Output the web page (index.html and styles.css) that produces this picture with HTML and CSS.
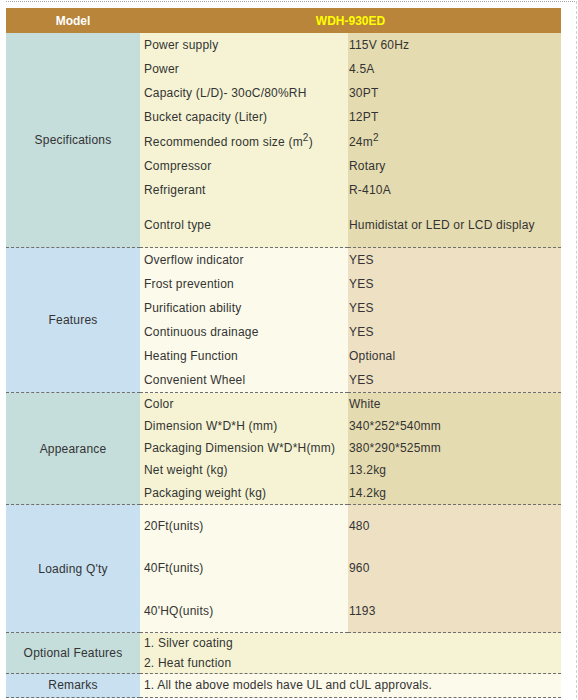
FILE: index.html
```html
<!DOCTYPE html>
<html lang="en">
<head>
    <meta charset="UTF-8">
    <meta name="viewport" content="width=device-width, initial-scale=1.0">
    <title>WDH-930ED Specifications</title>
    <link rel="stylesheet" href="styles.css">
</head>
<body>
    <div class="page">
        <table class="spec">
            <colgroup>
                <col class="col-group">
                <col class="col-name">
                <col class="col-value">
            </colgroup>
            <thead>
                <tr>
                    <th>Model</th>
                    <th colspan="2" class="model">WDH-930ED</th>
                </tr>
            </thead>

            <!-- Specifications -->
            <tbody class="sec-a">
                <tr class="r24">
                    <td rowspan="8" class="group">Specifications</td>
                    <td class="name">Power supply</td>
                    <td class="value">115V 60Hz</td>
                </tr>
                <tr class="r24"><td class="name">Power</td><td class="value">4.5A</td></tr>
                <tr class="r24"><td class="name">Capacity (L/D)- 30oC/80%RH</td><td class="value">30PT</td></tr>
                <tr class="r24"><td class="name">Bucket capacity (Liter)</td><td class="value">12PT</td></tr>
                <tr class="r25"><td class="name">Recommended room size (m<sup>2</sup>)</td><td class="value">24m<sup>2</sup></td></tr>
                <tr class="r24"><td class="name">Compressor</td><td class="value">Rotary</td></tr>
                <tr class="r24"><td class="name">Refrigerant</td><td class="value">R-410A</td></tr>
                <tr class="r46 last"><td class="name">Control type</td><td class="value">Humidistat or LED or LCD display</td></tr>
            </tbody>

            <!-- Features -->
            <tbody class="sec-b">
                <tr class="r24">
                    <td rowspan="6" class="group">Features</td>
                    <td class="name">Overflow indicator</td>
                    <td class="value">YES</td>
                </tr>
                <tr class="r24"><td class="name">Frost prevention</td><td class="value">YES</td></tr>
                <tr class="r24"><td class="name">Purification ability</td><td class="value">YES</td></tr>
                <tr class="r24"><td class="name">Continuous drainage</td><td class="value">YES</td></tr>
                <tr class="r24"><td class="name">Heating Function</td><td class="value">Optional</td></tr>
                <tr class="r25 last"><td class="name">Convenient Wheel</td><td class="value">YES</td></tr>
            </tbody>

            <!-- Appearance -->
            <tbody class="sec-a">
                <tr class="r22">
                    <td rowspan="5" class="group">Appearance</td>
                    <td class="name">Color</td>
                    <td class="value">White</td>
                </tr>
                <tr class="r22"><td class="name">Dimension W*D*H (mm)</td><td class="value">340*252*540mm</td></tr>
                <tr class="r22"><td class="name">Packaging Dimension W*D*H(mm)</td><td class="value">380*290*525mm</td></tr>
                <tr class="r22"><td class="name">Net weight (kg)</td><td class="value">13.2kg</td></tr>
                <tr class="r24 last"><td class="name">Packaging weight (kg)</td><td class="value">14.2kg</td></tr>
            </tbody>

            <!-- Loading -->
            <tbody class="sec-b">
                <tr class="r42">
                    <td rowspan="3" class="group">Loading Q'ty</td>
                    <td class="name">20Ft(units)</td>
                    <td class="value">480</td>
                </tr>
                <tr class="r42"><td class="name">40Ft(units)</td><td class="value">960</td></tr>
                <tr class="r44 last"><td class="name">40'HQ(units)</td><td class="value">1193</td></tr>
            </tbody>

            <!-- Optional features -->
            <tbody class="sec-a">
                <tr class="r20">
                    <td rowspan="2" class="group">Optional Features</td>
                    <td colspan="2" class="name">1. Silver coating</td>
                </tr>
                <tr class="r21 last"><td colspan="2" class="name">2. Heat function</td></tr>
            </tbody>

            <!-- Remarks -->
            <tbody class="sec-b remarks">
                <tr class="r24 last">
                    <td class="group">Remarks</td>
                    <td colspan="2" class="name">1. All the above models have UL and cUL approvals.</td>
                </tr>
            </tbody>
        </table>
    </div>
</body>
</html>
```

FILE: styles.css
```css
body {
    margin: 0;
    background-color: #fff;
    font-family: "Liberation Sans", Arial, sans-serif;
}
.page {
    width: 570px;
    margin: 1px 0 0 6px;
    padding-top: 6px;
    min-height: 700px;
    border-top: 1px dotted #a8a8a8;
    border-right: 1px dashed #cfcfcf;
}
.spec {
    width: 555px;
    border-collapse: separate;
    border-spacing: 0;
    table-layout: fixed;
    font-size: 12px;
    letter-spacing: 0.2px;
    color: #333;
}
.col-group { width: 134px; }
.col-name { width: 208px; }
.col-value { width: 213px; }

.spec th {
    height: 25px;
    padding: 0;
    background-color: #b9853a;
    color: #fff;
    font-weight: bold;
    letter-spacing: 0;
    text-align: center;
}
.spec th.model {
    color: #ffff00;
}
.spec td {
    padding: 0;
    vertical-align: middle;
    white-space: nowrap;
}
.spec td.group {
    text-align: center;
}
.spec td.name {
    padding-left: 4px;
}
.spec td.value {
    padding-left: 1px;
}
.spec sup {
    font-size: 10px;
    line-height: 0;
    vertical-align: 5px;
}
.remarks td {
    padding-bottom: 2px;
}

/* alternating section colours */
.sec-a .group { background-color: #c5dddb; }
.sec-a .name { background-color: #f5f3d4; }
.sec-a .value { background-color: #e5dbb0; }
.sec-b .group { background-color: #c8e0f0; }
.sec-b .name { background-color: #fcfaea; }
.sec-b .value { background-color: #ede0c3; }

.spec tr.last td,
.spec td.group {
    border-bottom: 1px dashed #6f6f6f;
}

.r20 { height: 20px; }
.r21 { height: 21px; }
.r22 { height: 22px; }
.r24 { height: 24px; }
.r25 { height: 25px; }
.r42 { height: 42px; }
.r44 { height: 44px; }
.r46 { height: 46px; }
```
